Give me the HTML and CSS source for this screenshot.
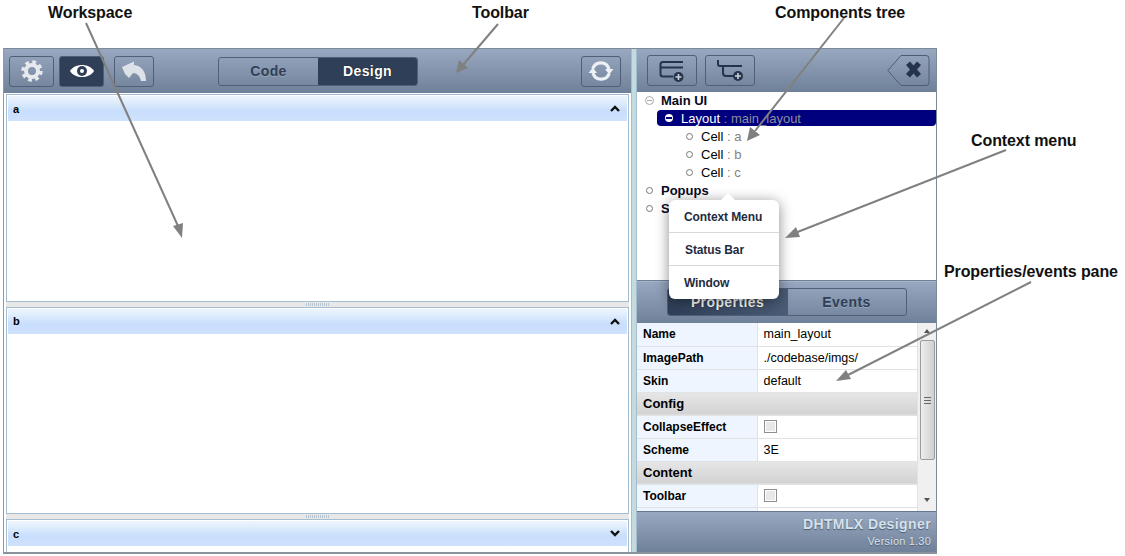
FILE: index.html
```html
<!DOCTYPE html>
<html lang="en">
<head>
<meta charset="utf-8">
<title>DHTMLX Designer</title>
<link rel="stylesheet" href="styles.css">
</head>
<body>
<div class="app">
  <section class="left">
    <div class="toolbar">
      <button class="tbtn gear" aria-label="Settings">
        <svg width="22" height="22" viewBox="0 0 22 22"><circle cx="11" cy="11" r="6" fill="none" stroke="#e6e9ed" stroke-width="4"/><circle cx="11" cy="11" r="9" fill="none" stroke="#e6e9ed" stroke-width="3.400" stroke-dasharray="3.750 3.320"/></svg>
      </button>
      <button class="tbtn eye on" aria-label="Preview">
        <svg width="26" height="18" viewBox="0 0 26 18"><path d="M1 9C6 1 20 1 25 9 20 17 6 17 1 9Z" fill="#fff"/><circle cx="13" cy="9" r="5" fill="#2f3f58"/><circle cx="13" cy="9" r="2" fill="#fff"/></svg>
      </button>
      <button class="tbtn undo" aria-label="Undo">
        <svg width="26" height="22" viewBox="0 0 26 22"><path d="M1 7 13 1.500v3.500C20 5.500 25 11 25 21H20C19 16 16 13 12 13L8 18 4 14Z" fill="#dde2e8"/></svg>
      </button>
      <div class="seg main-seg">
        <span class="seg-item">Code</span>
        <span class="seg-item active">Design</span>
      </div>
      <button class="tbtn refresh" aria-label="Refresh">
        <svg width="26" height="26" viewBox="0 0 26 26"><path d="M4.800 10.500A8.500 8.500 0 0 1 21 11" fill="none" stroke="#eef1f4" stroke-width="3.200"/><path d="M21.200 15.500A8.500 8.500 0 0 1 5 15" fill="none" stroke="#eef1f4" stroke-width="3.200"/><path d="M17 11H25.500L21.200 16.500Z" fill="#eef1f4"/><path d="M.5 15H9L4.800 9.500Z" fill="#eef1f4"/></svg>
      </button>
    </div>
    <div class="panels">
      <div class="panel grow">
        <header class="phead"><b>a</b><svg class="chev" width="10" height="7" viewBox="0 0 10 7"><path d="M1 6 5 2 9 6" fill="none" stroke="#111" stroke-width="2.400"/></svg></header>
        <div class="pbody"></div>
      </div>
      <div class="split"><i></i></div>
      <div class="panel grow">
        <header class="phead"><b>b</b><svg class="chev" width="10" height="7" viewBox="0 0 10 7"><path d="M1 6 5 2 9 6" fill="none" stroke="#111" stroke-width="2.400"/></svg></header>
        <div class="pbody"></div>
      </div>
      <div class="split"><i></i></div>
      <div class="panel last">
        <header class="phead"><b>c</b><svg class="chev" width="10" height="7" viewBox="0 0 10 7"><path d="M1 1 5 5 9 1" fill="none" stroke="#111" stroke-width="2.400"/></svg></header>
        <div class="pbody"></div>
      </div>
    </div>
  </section>
  <div class="vsplit"></div>
  <section class="right">
    <div class="toolbar rtool">
      <button class="tbtn add1" aria-label="Add">
        <svg width="26" height="24" viewBox="0 0 26 24"><path d="M24 3H4Q1.500 3 1.500 5.500V15Q1.500 17.500 4 17.500H14M1.500 8.500H24" fill="none" stroke="#26344b" stroke-width="2"/><circle cx="19.500" cy="18" r="5" fill="#26344b"/><path d="M16.500 18h6M19.500 15v6" stroke="#c9d1dc" stroke-width="1.600"/></svg>
      </button>
      <button class="tbtn add2" aria-label="Add child">
        <svg width="28" height="24" viewBox="0 0 28 24"><path d="M2 1v4q0 2 2 2h22M7 8v6q0 3 3 3h8" fill="none" stroke="#26344b" stroke-width="2"/><circle cx="22" cy="17" r="5" fill="#26344b"/><path d="M19 17h6M22 14v6" stroke="#c9d1dc" stroke-width="1.600"/></svg>
      </button>
      <svg class="del" width="43" height="31" viewBox="0 0 43 31" role="img" aria-label="Delete"><path d="M14 .5h25a3 3 0 0 1 3 3v24a3 3 0 0 1-3 3H14L.8 15.500Z" fill="none" stroke="#4d5d75"/><path d="M19 10l4-3.500 3.500 4 3.500-4 4 3.500-4 4.500 4 4.500-4 3.500-3.500-4-3.500 4-4-3.500 4-4.500Z" fill="#26344b"/></svg>
    </div>
    <div class="tree">
      <div class="node top first"><span class="mark minus"></span><b>Main UI</b></div>
      <div class="node sel"><span class="mark wminus"></span>Layout<em> : main_layout</em></div>
      <div class="node leaf"><span class="mark"></span>Cell<em> : a</em></div>
      <div class="node leaf"><span class="mark"></span>Cell<em> : b</em></div>
      <div class="node leaf"><span class="mark"></span>Cell<em> : c</em></div>
      <div class="node top"><span class="mark"></span><b>Popups</b></div>
      <div class="node top"><span class="mark"></span><b>S</b></div>
    </div>
    <div class="toolbar tabsbar">
      <div class="seg tab-seg">
        <span class="seg-item active">Properties</span>
        <span class="seg-item">Events</span>
      </div>
    </div>
    <div class="gridwrap">
      <table class="grid">
        <tr><th>Name</th><td>main_layout</td></tr>
        <tr><th>ImagePath</th><td>./codebase/imgs/</td></tr>
        <tr><th>Skin</th><td>default</td></tr>
        <tr class="group"><th colspan="2">Config</th></tr>
        <tr><th>CollapseEffect</th><td><span class="check"></span></td></tr>
        <tr><th>Scheme</th><td>3E</td></tr>
        <tr class="group"><th colspan="2">Content</th></tr>
        <tr><th>Toolbar</th><td><span class="check"></span></td></tr>
        <tr><th>&nbsp;</th><td></td></tr>
      </table>
      <div class="sbar">
        <span class="sup"></span>
        <span class="thumb"><i></i></span>
        <span class="sdown"></span>
      </div>
    </div>
    <footer class="foot">
      <strong>DHTMLX Designer</strong>
      <small>Version 1.30</small>
    </footer>
  </section>
</div>

<div class="popup">
  <div>Context Menu</div>
  <div class="st">Status Bar</div>
  <div>Window</div>
</div>

<svg class="arrows" width="1125" height="556" viewBox="0 0 1125 556" aria-hidden="true">
  <g fill="none" stroke="#808080" stroke-width="2">
    <path d="M86 23 178 226"/>
    <path d="M498 24 463 65"/>
    <path d="M844 18 755 131"/>
    <path d="M1006 150 795 233"/>
    <path d="M1031 282 848 375"/>
  </g>
  <g fill="#808080">
    <path d="M182 238 173 226 183 223Z"/>
    <path d="M456 73 459 60 468 68Z"/>
    <path d="M747 141 750 127 760 135Z"/>
    <path d="M785 238 796 227 800 237Z"/>
    <path d="M836 381 846 370 851 379Z"/>
  </g>
</svg>
<div class="note n1">Workspace</div>
<div class="note n2">Toolbar</div>
<div class="note n3">Components tree</div>
<div class="note n4">Context menu</div>
<div class="note n5">Properties/events pane</div>
</body>
</html>
```
FILE: styles.css
```css
* { box-sizing: border-box; }
html, body { margin: 0; padding: 0; background: #fff; overflow: hidden; }
body { width: 1125px; height: 556px; font-family: "Liberation Sans", Arial, sans-serif; }

.app {
  display: flex;
  width: 934px;
  height: 506px;
  margin: 48px 0 0 3px;
  border-top: 1px solid #7f8a99;
  border-bottom: 2px solid #8a929c;
  border-right: 1px solid #7f8a99;
  border-left: 1px solid #8d99a8;
  background: #fff;
}
.left { width: 627px; display: flex; flex-direction: column; }
.right { width: 299px; display: flex; flex-direction: column; }
.vsplit { width: 6px; background: #c3dadf; border-left: 1px solid #a4bdd0; border-right: 1px solid #a4bdd0; }

.toolbar {
  display: flex;
  align-items: center;
  height: 44px;
  flex: none;
  background: linear-gradient(#98a8c0, #6f8199);
  padding-left: 5px;
}
.tbtn {
  display: flex;
  align-items: center;
  justify-content: center;
  height: 31px;
  padding: 0;
  background: transparent;
  border: 1px solid #4f5f78;
  border-radius: 3px;
}
.gear { width: 45px; }
.eye { width: 45px; margin-left: 5px; }
.eye.on { background: #2f3f58; }
.undo { width: 40px; margin-left: 10px; }
.seg {
  display: flex;
  border: 1px solid #4f5f78;
  border-radius: 3px;
  overflow: hidden;
  font-weight: bold;
  font-size: 14px;
  letter-spacing: .4px;
  color: #2f3f58;
  text-shadow: 0 1px 0 rgba(255,255,255,.2);
}
.seg-item { flex: 1; display: flex; align-items: center; justify-content: center; }
.seg-item.active { background: #2f3f58; color: #fff; text-shadow: 0 0 1px #000; }
.main-seg { width: 200px; height: 29px; margin-left: 64px; }
.refresh { width: 40px; margin-left: 163px; }

.panels {
  flex: 1;
  min-height: 0;
  display: flex;
  flex-direction: column;
  padding: 1px 2px 0 2px;
  background: #fff;
}
.panel { display: flex; flex-direction: column; border: 1px solid #a4bdd0; min-height: 0; }
.panel.grow { flex: 1; }
.panel.last { height: 33px; flex: none; border-bottom: 0; }
.phead {
  display: flex;
  align-items: center;
  justify-content: space-between;
  flex: none;
  height: 26px;
  padding: 0 7px 0 5px;
  font-size: 11px;
  color: #000;
  border: 1px solid #fff;
  border-bottom: 0;
  box-shadow: 0 1px 0 #a4bdd0;
  background: linear-gradient(#eef5fd 0, #e2eefc 20%, #c8defc 60%, #cfe2fd 100%);
}
.pbody { flex: 1; background: #fff; }
.split {
  flex: none;
  height: 5px;
  background: #e8e8e8;
  display: flex;
  justify-content: center;
  align-items: center;
}
.split i { width: 24px; height: 3px; background: repeating-linear-gradient(90deg, #b9c6d2 0 1px, transparent 1px 2px); }

.rtool { padding-left: 10px; height: 43px; }
.add1, .add2 { width: 50px; }
.add2 { margin-left: 8px; }
.del { margin-left: 132px; }

.tree {
  height: 188px;
  flex: none;
  background: #fff;
  font-size: 13px;
  color: #000;
  overflow: hidden;
}
.node { height: 18px; display: flex; align-items: center; white-space: pre; }
.node.first { height: 17px; }
.node em { font-style: normal; color: #8a7f7a; }
.node b { font-size: 13px; color: #050a1e; }
.mark {
  width: 7px; height: 7px; flex: none;
  border: 1px solid #777; border-radius: 50%;
  background: #fff;
}
.top { padding-left: 9px; }
.top .mark { margin-right: 8px; }
.top .minus {
  width: 9px; height: 9px; margin-left: -1px; margin-right: 7px;
  border-color: #aaa;
  background: linear-gradient(#aaa, #aaa) center / 5px 1px no-repeat #fff;
}
.sel {
  margin-left: 20px;
  padding-left: 8px;
  background: #00007f;
  color: #fff;
  border-radius: 4px 0 4px 4px;
  height: 16px;
  margin-top: 1px;
  margin-bottom: 1px;
}
.sel em { color: #8d8d9d; }
.sel .mark { width: 8px; height: 8px; margin-right: 8px; border: 0; background: linear-gradient(#00007f, #00007f) center / 6px 2px no-repeat #fff; }
.leaf { padding-left: 49px; }
.leaf .mark { margin-right: 8px; }

.tabsbar { justify-content: center; height: 43px; padding-left: 0; border-top: 1px solid #6f8199; box-shadow: inset 0 1px 0 #a8b4c6; }
.tab-seg { width: 240px; height: 28px; }
.tab-seg .seg-item:first-child { flex: none; width: 120px; background: linear-gradient(90deg, #2f3f58, #4a5c76); }

.gridwrap { display: flex; height: 188px; flex: none; overflow: hidden; position: relative; }
.grid { width: 281px; border-collapse: collapse; table-layout: fixed; font-size: 12px; color: #000; align-self: flex-start; }
.grid tr { height: 23px; }
.grid th, .grid td { padding: 0 0 0 6px; border: 1px solid #e0e3e6; border-width: 0 1px 1px 0; text-align: left; white-space: nowrap; }
.grid th { width: 120px; background: #eef5fe; font-weight: bold; }
.grid td { background: #fff; font-size: 12.500px; }
.grid .group th { background: linear-gradient(#e6e6e6, #d2d2d2); font-size: 13px; font-weight: bold; }
.check { display: block; width: 13px; height: 13px; border: 1px solid #8e8f8f; background: #e8e8e8; box-shadow: inset 0 0 0 1px #fff; }
.sbar { width: 18px; background: #f0f0f0; position: relative; display: flex; flex-direction: column; align-items: center; }
.sup, .sdown { flex: none; width: 0; height: 0; border: 3px solid transparent; }
.sup { border-bottom: 4px solid #555; margin: 3px 0 4px; }
.sdown { border-top: 4px solid #555; position: absolute; top: 175px; }
.thumb {
  width: 15px; height: 120px; margin-top: 3px;
  border: 1px solid #9c9c9c; border-radius: 2px;
  background: linear-gradient(90deg, #ededed, #d0d0d0);
  display: flex; align-items: center; justify-content: center;
}
.thumb i { width: 7px; height: 7px; background: repeating-linear-gradient(#666 0 1px, transparent 1px 3px); }

.foot {
  flex: 1;
  min-height: 0;
  display: flex;
  flex-direction: column;
  align-items: flex-end;
  justify-content: flex-start;
  padding: 4px 5px 0 0;
  background: linear-gradient(#98a8c0, #6f8199);
  border-top: 1px solid #67778f;
  color: #d6e1ea;
}
.foot strong { font-size: 14px; letter-spacing: .4px; text-shadow: 0 1px 1px #4c5a70; }
.foot small { font-size: 11px; margin-top: 3px; letter-spacing: .2px; text-shadow: 0 1px 1px #4c5a70; }

.popup {
  position: absolute;
  left: 669px;
  top: 200px;
  width: 110px;
  height: 99px;
  background: #fff;
  border-radius: 6px;
  box-shadow: 0 2px 14px rgba(0,0,0,.45);
  font-size: 12px;
  font-weight: bold;
  color: #1f2b40;
  letter-spacing: -.1px;
}
.popup::before {
  content: "";
  position: absolute;
  left: 54px;
  top: -5px;
  width: 10px;
  height: 10px;
  background: #fff;
  transform: rotate(45deg);
}
.popup div {
  position: relative;
  height: 33px;
  padding: 2px 0 0 15px;
  display: flex;
  align-items: center;
  border-bottom: 1px solid #d8d8d8;
}
.popup div:last-child { border-bottom: 0; padding-top: 0; }
.popup .st { padding-left: 16px; }

.arrows { position: absolute; left: 0; top: 0; pointer-events: none; }
.note { position: absolute; font-size: 16px; font-weight: bold; color: #111; white-space: nowrap; line-height: 17px; letter-spacing: -.1px; }
.n1 { left: 48px; top: 4px; }
.n2 { left: 472px; top: 4px; }
.n3 { left: 775px; top: 4px; }
.n4 { left: 971px; top: 132px; }
.n5 { left: 944px; top: 263px; }
```
